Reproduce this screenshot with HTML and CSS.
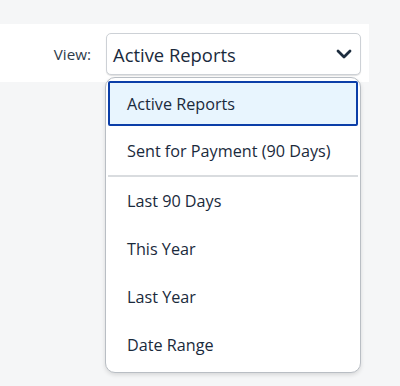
FILE: index.html
```html
<!DOCTYPE html>
<html lang="en">
<head>
<meta charset="utf-8">
<title>View selector</title>
<link rel="stylesheet" href="styles.css">
</head>
<body>
<div class="page">
  <div class="toolbar">
    <span class="label">View:</span>
    <div class="field">
      <div class="select">
        <span class="value">Active Reports</span>
        <svg class="chev" width="16" height="10" viewBox="0 0 16 10" aria-hidden="true"><path d="M2 2 L8 8 L14 2" fill="none" stroke="#1d2d3e" stroke-width="2.8" stroke-linecap="round" stroke-linejoin="round"/></svg>
      </div>
      <ul class="menu">
        <li class="option selected">Active Reports</li>
        <li class="option">Sent for Payment (90 Days)</li>
        <li class="divider"></li>
        <li class="option">Last 90 Days</li>
        <li class="option">This Year</li>
        <li class="option">Last Year</li>
        <li class="option">Date Range</li>
      </ul>
    </div>
  </div>
</div>
</body>
</html>
```
FILE: styles.css
```css
html, body {
  margin: 0;
  padding: 0;
}
body {
  background: #f5f6f7;
  font-family: "Open Sans", "Liberation Sans", Arial, sans-serif;
  color: #1a2a3c;
  width: 400px;
  height: 386px;
  overflow: hidden;
}
.page {
  padding-top: 24px;
}
.toolbar {
  width: 369px;
  box-sizing: border-box;
  height: 58px;
  background: #ffffff;
  display: flex;
  justify-content: flex-end;
  align-items: flex-start;
  padding: 9px 8px 0 0;
  gap: 15px;
}
.label {
  font-size: 15.2px;
  line-height: 42px;
  color: #2e3b4a;
}
.field {
  position: relative;
}
.select {
  width: 255px;
  height: 42px;
  box-sizing: border-box;
  border: 1px solid #cdd1d6;
  border-radius: 5px;
  box-shadow: 0 1px 1px rgba(0, 0, 0, 0.12);
  display: flex;
  align-items: center;
  justify-content: space-between;
  padding: 0 8px 0 6px;
  background: #fff;
}
.value {
  font-size: 18.4px;
  color: #1a2a3c;
}
.chev {
  display: block;
}
.menu {
  position: absolute;
  top: 44px;
  left: -1px;
  width: 256px;
  box-sizing: border-box;
  margin: 0;
  padding: 1px 0 3px;
  list-style: none;
  background: #fff;
  border: 1px solid #b9bec4;
  border-radius: 10px;
  box-shadow: 0 2px 4px rgba(0, 0, 0, 0.12);
}
.option {
  height: 48px;
  box-sizing: border-box;
  display: flex;
  align-items: center;
  padding-left: 21px;
  font-size: 16.2px;
  color: #1a2a3c;
}
.option.selected {
  height: 45px;
  margin: 2px 2px 1px;
  padding-left: 17px;
  background: #e8f5fe;
  border: 2px solid #0b3ea8;
  border-radius: 2px;
}
.divider {
  height: 2px;
  margin: 0 2px;
  background: #d9dcdf;
}
```
